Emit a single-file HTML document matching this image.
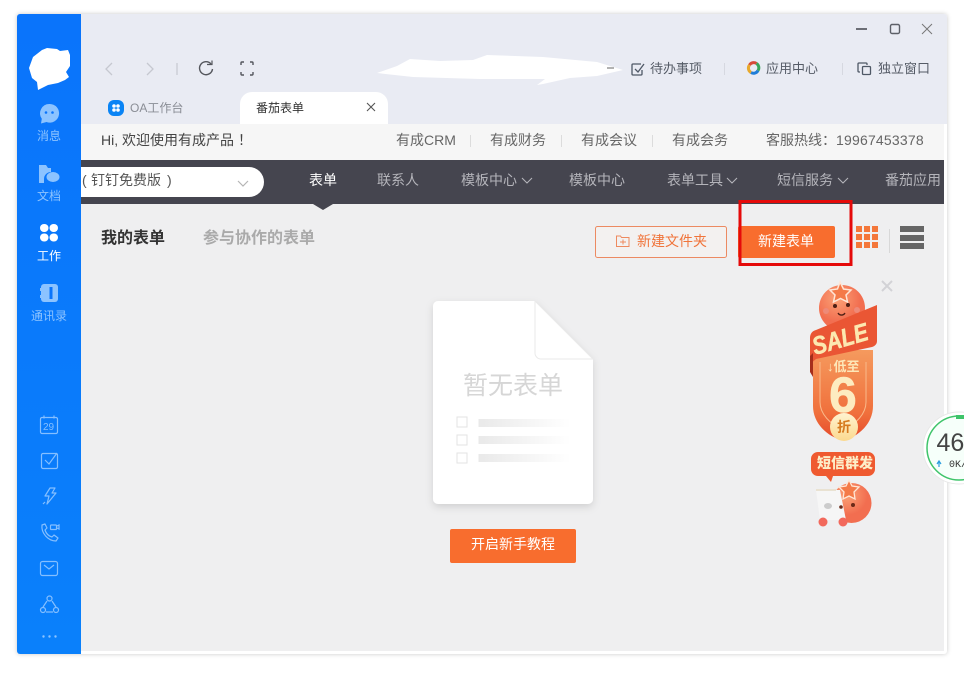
<!DOCTYPE html>
<html lang="zh"><head><meta charset="utf-8"><title>番茄表单</title>
<style>
html,body{margin:0;padding:0;background:#fff;width:964px;height:674px;overflow:hidden}
body{position:relative;font-family:"Liberation Sans","Noto Sans CJK SC",sans-serif;font-size:13px;color:#555}
.a{position:absolute;white-space:nowrap}
svg{position:absolute;overflow:visible}
.t{line-height:18px;height:18px}
.n{top:171px;color:#b4b4ba;font-size:14px}
.sb{left:17px;width:64px;text-align:center;font-size:12px;line-height:16px;color:#8cc3ff}
</style></head><body>
<div class="a" style="left:17px;top:14px;width:930px;height:640px;background:#fff;border-radius:3px;box-shadow:0 0 5px rgba(0,0,0,.22)"></div>
<div class="a" style="left:81px;top:14px;width:866px;height:110px;background:#e9ebf3;border-radius:0 3px 0 0"></div>
<div class="a" style="left:81px;top:124px;width:863px;height:36px;background:#f6f6f6"></div>
<div class="a" style="left:81px;top:160px;width:863px;height:44px;background:#45454f"></div>
<div class="a" style="left:81px;top:204px;width:863px;height:447px;background:#efeff0"></div>
<div class="a" style="left:17px;top:14px;width:64px;height:640px;background:linear-gradient(#0a74fb,#0a80fb);border-radius:3px 0 0 3px"></div>

<!-- sidebar -->
<svg style="left:0;top:0" width="90" height="660">
<path d="M33 57L42 50L47 48L57 49L60 51L68 50L70 55L70 66L66 72L69 77L65 80L58 83L48 85L38 90L37 82L32 78L29 68Z" fill="#fff"/>
<path d="M49.500 104a9.300 9.300 0 1 1-3 18l-5.500 1.500 .8-4.800a9.300 9.300 0 0 1 7.700-14.700z" fill="#8cc3ff"/><circle cx="46" cy="112.500" r="1.300" fill="#0a74fb"/><circle cx="52.500" cy="112.500" r="1.300" fill="#0a74fb"/>
<path d="M39 165h7l2 3h3v4a7 7 0 0 0-7 7v4h-5z" fill="#8cc3ff"/><ellipse cx="53" cy="177" rx="6.500" ry="5" fill="#8cc3ff"/>
<g fill="#fff"><rect x="40" y="224" width="8.500" height="8" rx="4"/><rect x="49.500" y="224" width="8.500" height="8" rx="4"/><rect x="40" y="233.500" width="8.500" height="8" rx="4"/><rect x="49.500" y="233.500" width="8.500" height="8" rx="4"/></g>
<rect x="41" y="284" width="17" height="18" rx="3" fill="#8cc3ff"/><rect x="49.500" y="287" width="3" height="12" fill="#0a74fb"/><rect x="40" y="288" width="2" height="3" fill="#8cc3ff"/><rect x="40" y="295" width="2" height="3" fill="#8cc3ff"/>
<g fill="none" stroke="#85bfff" stroke-width="1.200">
<rect x="40.500" y="417.500" width="17" height="16" rx="1.500"/><path d="M44 415.500v3M54 415.500v3"/>
<rect x="41.500" y="453.500" width="16" height="15" rx="1.500"/><path d="M45 460l4 4 8-11"/>
<path d="M50 488h5l-3 5h4l-9 11 2-8h-4z" stroke-linejoin="round"/><path d="M43 504l2-2"/>
<path d="M42 525l3-1 2 4-2 2c1 3 3 6 7 7l2-2 4 3-2 3c-8 0-15-8-14-16z" stroke-linejoin="round"/><rect x="50.500" y="525" width="6" height="4.500" rx=".8"/><path d="M57 526l2-1v4l-2-1"/>
<rect x="40.500" y="561.500" width="17" height="14" rx="2"/><path d="M44 565l5 4 5-4"/>
<circle cx="49.500" cy="598.500" r="2.500"/><circle cx="43" cy="610" r="2.500"/><circle cx="56" cy="610" r="2.500"/><path d="M47 601l-4 6M52 601l4 6M46 612h7"/>
</g>
<text x="43" y="430" font-family="Liberation Sans" font-size="10" fill="#85bfff">29</text>
<g fill="#8cc3ff"><circle cx="43.500" cy="636.500" r="1.200"/><circle cx="49.500" cy="636.500" r="1.200"/><circle cx="55.500" cy="636.500" r="1.200"/></g>
</svg>
<div class="a sb" style="top:128px">消息</div>
<div class="a sb" style="top:188px">文档</div>
<div class="a sb" style="top:248px;color:#fff">工作</div>
<div class="a sb" style="top:308px">通讯录</div>

<!-- window controls & toolbar icons -->
<svg style="left:0;top:0" width="964" height="250">
<g fill="none" stroke="#5d6068" stroke-width="1.400">
<path d="M856 29h11" stroke-width="1.800"/><rect x="890.500" y="24.500" width="9" height="9" rx="1.500"/>
<path d="M922 24l10 10M932 24l-10 10" stroke-width="1" stroke="#777"/>
</g>
<g fill="none" stroke="#c6c8d0" stroke-width="1.300"><path d="M112 63l-6 6 6 6M147 63l6 6-6 6"/><path d="M177 63v12" stroke="#c9cbd2"/></g>
<g fill="none" stroke="#54565c" stroke-width="1.400"><path d="M211 64a6.500 6.500 0 1 0 1.500 5"/><path d="M207 64.500h5v-4" stroke-width="1.200"/>
<path d="M241 65v-2a1 1 0 0 1 1-1h2M250 62h2a1 1 0 0 1 1 1v2M253 72v2a1 1 0 0 1-1 1h-2M244 75h-2a1 1 0 0 1-1-1v-2"/></g>
<path d="M377 73L397 66L410 59L440 61L473 60L487 55L543 57L597 62L623 70L597 76L570 78L543 84L537 85L545 79L480 79L413 77Z" fill="#fff"/>
<path d="M607 68h7" stroke="#888" stroke-width="1.300"/>
<g fill="none" stroke="#4f5866" stroke-width="1.300"><path d="M642 70v4a1 1 0 0 1-1 1h-8a1 1 0 0 1-1-1v-9a1 1 0 0 1 1-1h8"/><path d="M635 69l3 3 6-8"/>
<rect x="862.500" y="66.500" width="8" height="8" rx="1"/><path d="M860 72h-1a1 1 0 0 1-1-1v-7a1 1 0 0 1 1-1h7a1 1 0 0 1 1 1v1"/></g>
<path d="M724.500 63v12M842.500 63v12" stroke="#d6d8e0"/>
<g fill="none" stroke-width="3"><path d="M749.500 65a5 5 0 0 1 7-1.500" stroke="#d84a38"/><path d="M756.500 63.500a5 5 0 0 1 1.500 7" stroke="#39a65a"/><path d="M758 70.500a5 5 0 0 1-7 2" stroke="#1f7ed8"/><path d="M751 72.500a5 5 0 0 1-1.500-7.500" stroke="#e8a92c"/></g>
<!-- tab -->
<path d="M240 124v-20a12 12 0 0 1 12-12h124a12 12 0 0 1 12 12v20z" fill="#fff"/>
<rect x="108" y="100" width="16" height="16" rx="6" fill="#0a84f5"/>
<g fill="#fff"><circle cx="114" cy="106" r="1.800"/><circle cx="118" cy="106" r="1.800"/><circle cx="114" cy="110" r="1.800"/><circle cx="118" cy="110" r="1.800"/></g>
<path d="M367 103l8 8M375 103l-8 8" stroke="#555" stroke-width="1.100"/>
<!-- separators -->
<g stroke="#dcdcdc"><path d="M470.500 135v12M561.500 135v12M652.500 135v12"/></g>
<!-- select -->
<path d="M81 167h168a15 15 0 0 1 0 30H81z" fill="#fff"/>
<path d="M238 181l5 5 5-5" fill="none" stroke="#b5b5b5" stroke-width="1.200"/>
<path d="M522 178l5 5 5-5M727 178l5 5 5-5M838 178l5 5 5-5" fill="none" stroke="#b4b4ba" stroke-width="1.100"/>
<path d="M313 204h20l-10 6z" fill="#45454f"/>
<!-- buttons -->
<rect x="595.500" y="226.500" width="131" height="31" rx="2" fill="#f3f1f0" stroke="#ec8a62"/>
<rect x="738" y="226" width="97" height="32" rx="2" fill="#f86d2e"/>
<path d="M616.500 236h4l1 1.500h7.500v9h-12.500zM620 242h6M623 239.500v5" fill="none" stroke="#ee8a5f" stroke-width="1"/>
<rect x="740" y="201.500" width="111" height="63" fill="none" stroke="#e50a0a" stroke-width="3"/>
<g fill="#f4773a"><rect x="856" y="226" width="6" height="6"/><rect x="864" y="226" width="6" height="6"/><rect x="872" y="226" width="6" height="6"/><rect x="856" y="234" width="6" height="6"/><rect x="864" y="234" width="6" height="6"/><rect x="872" y="234" width="6" height="6"/><rect x="856" y="242" width="6" height="6"/><rect x="864" y="242" width="6" height="6"/><rect x="872" y="242" width="6" height="6"/></g>
<path d="M889.500 229v24" stroke="#d8d8d8"/>
<g fill="#666"><rect x="900" y="226" width="24" height="6"/><rect x="900" y="235" width="24" height="6"/><rect x="900" y="243" width="24" height="6"/></g>
</svg>
<div class="a t" style="left:130px;top:99px;color:#8a8d95;font-size:12px">OA工作台</div>
<div class="a t" style="left:256px;top:99px;color:#333;font-size:12px">番茄表单</div>
<div class="a t" style="left:650px;top:60px;color:#555b66">待办事项</div>
<div class="a t" style="left:766px;top:60px;color:#555b66">应用中心</div>
<div class="a t" style="left:878px;top:60px;color:#555b66">独立窗口</div>
<div class="a t" style="left:101px;top:131px;color:#444;font-size:14px">Hi, 欢迎使用有成产品</div>
<div class="a t" style="left:238px;top:131px;color:#444;font-size:14px">！</div>
<div class="a t" style="left:396px;top:131px;color:#666;font-size:14px">有成CRM</div>
<div class="a t" style="left:490px;top:131px;color:#666;font-size:14px">有成财务</div>
<div class="a t" style="left:581px;top:131px;color:#666;font-size:14px">有成会议</div>
<div class="a t" style="left:672px;top:131px;color:#666;font-size:14px">有成会务</div>
<div class="a t" style="left:766px;top:131px;color:#666;font-size:14px">客服热线：<span style="letter-spacing:.2px">19967453378</span></div>

<div class="a t" style="left:82px;top:171px;color:#555;font-size:14px">(</div>
<div class="a t" style="left:91px;top:171px;color:#555;font-size:14px">钉钉免费版</div>
<div class="a t" style="left:167px;top:171px;color:#555;font-size:14px">)</div>
<div class="a n t" style="left:309px;color:#fff">表单</div>
<div class="a n t" style="left:377px">联系人</div>
<div class="a n t" style="left:461px">模板中心</div>
<div class="a n t" style="left:569px">模板中心</div>
<div class="a n t" style="left:667px">表单工具</div>
<div class="a n t" style="left:777px">短信服务</div>
<div class="a n t" style="left:885px">番茄应用</div>

<div class="a" style="left:101px;top:228px;color:#333;font-size:16px;line-height:22px;font-weight:700">我的表单</div>
<div class="a" style="left:203px;top:228px;color:#aaa;font-size:16px;line-height:22px;font-weight:700">参与协作的表单</div>
<div class="a t" style="left:637px;top:232px;color:#f0743a;font-size:14px">新建文件夹</div>
<div class="a t" style="left:758px;top:232px;color:#fff;font-size:14px">新建表单</div>

<!-- empty doc -->
<svg style="left:0;top:0" width="964" height="674">
<defs>
<filter id="s" x="-20%" y="-20%" width="140%" height="140%"><feDropShadow dx="0" dy="3" stdDeviation="4" flood-color="#000" flood-opacity=".13"/></filter>
<linearGradient id="l"><stop offset="0" stop-color="#e9e9e9"/><stop offset="1" stop-color="#fff"/></linearGradient>
<linearGradient id="o" x1="0" y1="0" x2="0" y2="1"><stop offset="0" stop-color="#f59a5e"/><stop offset=".7" stop-color="#f0703c"/><stop offset="1" stop-color="#e5492a"/></linearGradient>
<radialGradient id="h" cx=".4" cy=".3"><stop offset="0" stop-color="#fba276"/><stop offset="1" stop-color="#f26e50"/></radialGradient>
<linearGradient id="c" x1="0" y1="0" x2="0" y2="1"><stop offset="0" stop-color="#fff3d0"/><stop offset="1" stop-color="#fbd98f"/></linearGradient>
</defs>
<path d="M438 301h97l58 58v140a5 5 0 0 1-5 5H438a5 5 0 0 1-5-5V306a5 5 0 0 1 5-5z" fill="#fff" filter="url(#s)"/>
<path d="M535 301l58 58h-52a6 6 0 0 1-6-6z" fill="#fff" stroke="#eaeaea"/>
<g fill="#fff" stroke="#e3e3e3"><rect x="457" y="417" width="10" height="10"/><rect x="457" y="435" width="10" height="10"/><rect x="457" y="453" width="10" height="10"/></g>
<rect x="478.500" y="419" width="92" height="8" fill="url(#l)"/><rect x="478.500" y="436" width="92" height="8" fill="url(#l)"/><rect x="478.500" y="454" width="92" height="8" fill="url(#l)"/>
<rect x="450" y="529" width="126" height="34" rx="2" fill="#f86d2e"/>
<!-- promo -->
<path d="M882 281l10 10M892 281l-10 10" stroke="#d2d2d6" stroke-width="2"/>
<circle cx="842" cy="308" r="23" fill="url(#h)"/>
<path d="M840 282l3.500 7 7.500 1-5 5 1.500 7-7-3.500-7 3.500 1.500-7-5-5 7.500-1z" fill="#f47a48" stroke="#ffe6d6" stroke-width="1.500"/>
<circle cx="835" cy="306" r="2" fill="#4d1f14"/><circle cx="848" cy="305" r="2" fill="#4d1f14"/><path d="M838 313a4 4 0 0 0 7 0" stroke="#4d1f14" stroke-width="1.300" fill="none"/>
<circle cx="826" cy="311" r="3" fill="#ee8a78"/><circle cx="857" cy="310" r="3" fill="#ee8a78"/>
<path d="M813 350h60v56c0 17-14 31-30 34-16-3-30-17-30-34z" fill="url(#o)"/>
<path d="M820 362v40c0 12 10 22 23 28 13-6 23-16 23-28v-40" fill="none" stroke="#f9b98a" stroke-width="1"/>
<path d="M810 338c0-4 2-7 6-8l61-25v36c0 3-2 5-5 6l-56 12-6 5z" fill="#ea5634"/>
<path d="M810 356v16l3 5v-24z" fill="#a52e1c"/>
<text x="815" y="355" transform="rotate(-16 815 355)" font-family="Liberation Sans" font-weight="700" font-style="italic" font-size="25" fill="#fce8b0" stroke="#fce8b0" stroke-width=".5" textLength="57" lengthAdjust="spacingAndGlyphs">SALE</text>
<text x="827" y="371" font-family="Liberation Sans,Noto Sans CJK SC" font-weight="700" font-size="13" fill="#fde7b8">↓低至</text>
<text x="829" y="412" font-family="Liberation Sans" font-weight="700" font-size="50" fill="#fdecc0" stroke="#fdecc0" stroke-width=".6">6</text>
<circle cx="844" cy="427" r="14" fill="url(#c)"/>
<text x="837" y="432" font-family="Noto Sans CJK SC" font-weight="700" font-size="14" fill="#d67a1e">折</text>
<path d="M818 452h50a7 7 0 0 1 7 7v10a7 7 0 0 1-7 7h-35l-2 6-5-6h-8a7 7 0 0 1-7-7v-10a7 7 0 0 1 7-7z" fill="#ef5a30"/>
<text x="817" y="468" font-family="Noto Sans CJK SC" font-weight="900" font-size="14" fill="#fdeec8">短信群发</text>
<ellipse cx="851.500" cy="503" rx="20" ry="20" fill="url(#h)"/>
<path d="M816 490h24l6 30h-26z" fill="#f6f6f6"/><path d="M816 490h20" stroke="#e9e2d2" stroke-width="2"/><ellipse cx="828" cy="506" rx="4" ry="3" fill="#ccc"/>
<circle cx="823" cy="522" r="4.500" fill="#f2695c"/><circle cx="843" cy="522" r="4.500" fill="#f2695c"/>
<path d="M849 480l3 6 7 1-5 5 1 7-6-3-6 3 1-7-5-5 7-1z" fill="#f47a48" stroke="#ffe6d6" stroke-width="1.300"/>
<circle cx="853" cy="505" r="2" fill="#6a2a18"/><circle cx="841" cy="507" r="1.800" fill="#6a2a18"/>
<!-- speed ball -->
<circle cx="959" cy="448" r="36" fill="#fff" stroke="#e8e8e8"/>
<circle cx="959" cy="448" r="32" fill="#f6fffa" stroke="#3fc46a" stroke-width="1.500"/>
<path d="M956 417h8" stroke="#3fc46a" stroke-width="4"/>
<path d="M939 467v-5M937 464l2-3 2 3" stroke="#2a9de0" stroke-width="1.200" fill="none"/>
<text x="936.500" y="451" font-family="Liberation Sans" font-size="25" fill="#444">46</text>
<text x="949" y="467" font-family="Liberation Mono" font-size="10" fill="#333">0K/</text>
</svg>
<div class="a" style="left:463px;top:369px;color:#d6d6d6;font-size:25px;line-height:34px">暂无表单</div>
<div class="a t" style="left:471px;top:535px;color:#fff;font-size:14px">开启新手教程</div>
</body></html>
